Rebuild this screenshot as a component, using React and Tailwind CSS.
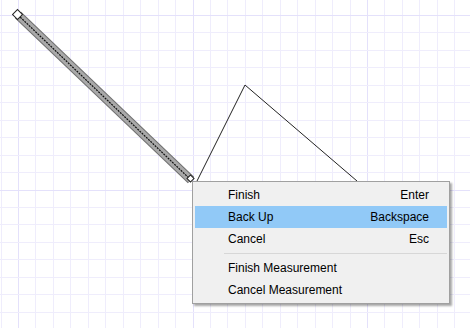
export default function App() {
  const step = 17.45;
  const vLines = [];
  for (let i = -1; i < 28; i++) vLines.push(18 + i * step);
  const hLines = [];
  for (let i = -1; i < 20; i++) hLines.push(15 + i * step);

  return (
    <div className="relative w-[470px] h-[328px] overflow-hidden bg-white font-['Liberation_Sans',sans-serif]">
      <svg width="470" height="328" className="block">
        {vLines.map((x, i) => (
          <line key={'v' + i} x1={Math.round(x) + 0.5} y1="0" x2={Math.round(x) + 0.5} y2="328" stroke={i % 10 === 1 ? '#e4e1fb' : '#efedfc'} strokeWidth="1" />
        ))}
        {hLines.map((y, i) => (
          <line key={'h' + i} x1="0" y1={Math.round(y) + 0.5} x2="470" y2={Math.round(y) + 0.5} stroke={i % 10 === 1 ? '#e4e1fb' : '#efedfc'} strokeWidth="1" />
        ))}
        <polyline points="197,181 245,85 357,181" fill="none" stroke="#222" strokeWidth="1" />
        <line x1="18" y1="15" x2="191" y2="180" stroke="#707070" strokeWidth="9" />
        <line x1="18" y1="15" x2="191" y2="180" stroke="#a9a9a9" strokeWidth="7" />
        <line x1="18" y1="15" x2="191" y2="180" stroke="#111" strokeWidth="1.2" strokeDasharray="2 1" />
        <rect x="14" y="11" width="7" height="7" transform="rotate(45 17.5 14.5)" fill="#fff" stroke="#222" strokeWidth="1" />
        <rect x="188" y="176" width="5" height="5" transform="rotate(45 190.5 178.5)" fill="#fff" stroke="#222" strokeWidth="1" />
      </svg>

      <div className="absolute left-[192px] top-[181px] w-[258px] bg-[#f0f0f0] border border-[#a0a0a0] shadow-[2px_2px_2px_rgba(0,0,0,0.35)] p-[2px] text-[12px] text-black">
        <div className="flex justify-between items-center h-[22px] pl-[33px] pr-[18px]">
          <span>Finish</span>
          <span>Enter</span>
        </div>
        <div className="flex justify-between items-center h-[22px] pl-[33px] pr-[18px] bg-[#91c9f7]">
          <span>Back Up</span>
          <span>Backspace</span>
        </div>
        <div className="flex justify-between items-center h-[22px] pl-[33px] pr-[18px]">
          <span>Cancel</span>
          <span>Esc</span>
        </div>
        <div className="ml-[29px] my-[3px] h-px bg-[#d7d7d7]" />
        <div className="flex items-center h-[22px] pl-[33px]">
          <span>Finish Measurement</span>
        </div>
        <div className="flex items-center h-[22px] pl-[33px]">
          <span>Cancel Measurement</span>
        </div>
      </div>
    </div>
  );
}
